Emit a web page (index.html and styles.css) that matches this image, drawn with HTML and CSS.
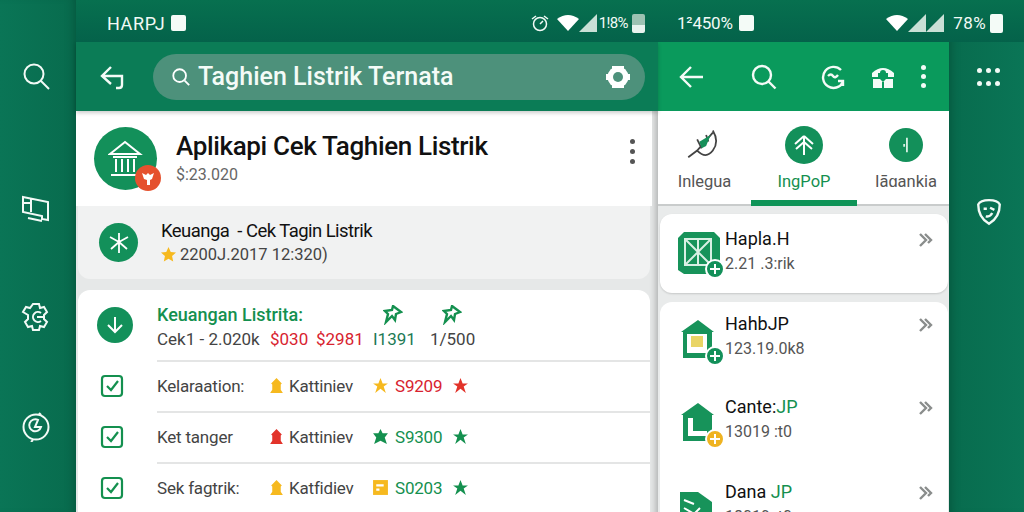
FILE: index.html
```html
<!DOCTYPE html>
<html lang="id">
<head>
  <meta charset="UTF-8" />
  <title>Cek Tagihan Listrik</title>
  <link rel="stylesheet" href="styles.css">
</head>
<body>
  <div class="screen">
    <!-- Rel kiri -->
    <nav class="rail rail-left">
      <svg class="rail-icon" viewBox="0 0 30 30"><circle cx="13" cy="12" r="9.5"/><path d="M20 19l8 8"/></svg>
      <svg class="rail-icon gap-lg" viewBox="0 0 30 30"><path d="M2 3l25 5v18l-6-1v-3L2 18zM10 5v13M2 9h8M7 24l14 3"/></svg>
      <svg class="rail-icon gap-md" viewBox="0 0 30 30"><path d="M12 2h6l1 4 4-1 3 5-3 3v4l3 3-3 5-4-1-1 4h-6l-1-4-4 1-3-5 3-3v-4L2 10l3-5 4 1z"/><path d="M20 11a5 5 0 1 0 0 8M16 15h8"/></svg>
      <svg class="rail-icon gap-compass" viewBox="0 0 30 30"><circle cx="15" cy="15" r="12.5"/><path d="M20 3l-2-2M12 28l-2 2"/><path d="M17 8a6 6 0 1 0 3 7h-6l3-7z"/></svg>
    </nav>

    <div class="main">
      <div class="status">
        <div class="status-left">
          <span class="status-text">HARPJ</span>
          <span class="status-card"></span>
          <div class="status-icons">
            <svg class="alarm" viewBox="0 0 18 18"><circle cx="9" cy="10" r="6.5"/><path d="M1 5l4-3M13 2l4 3M9 10l3-3"/></svg>
            <svg class="wifi" viewBox="0 0 22 16"><path d="M0 4q11-8 22 0L11 16z"/></svg>
            <svg class="signal" viewBox="0 0 18 18"><path d="M0 18L18 0v18z"/></svg>
            <span class="status-pct">1!8%</span>
            <span class="battery battery-dim"></span>
          </div>
        </div>
        <div class="status-right">
          <span class="status-text status-text-plain">1²450%</span>
          <span class="status-card"></span>
          <div class="status-icons">
            <svg class="wifi" viewBox="0 0 22 16"><path d="M0 4q11-8 22 0L11 16z"/></svg>
            <svg class="signal" viewBox="0 0 18 18"><path d="M0 18L18 0v18z"/></svg>
            <svg class="signal" viewBox="0 0 18 18"><path d="M0 18L18 0v18z"/></svg>
            <span class="status-pct status-pct-wide">78%</span>
            <span class="battery"></span>
          </div>
        </div>
      </div>

      <div class="panels">
        <!-- Panel kiri -->
        <section class="panel-left">
          <header class="bar-left">
            <svg class="bar-icon" viewBox="0 0 26 26"><path d="M11 3L2 12l9 8M2 12h20v9q0 3-3 3h-3"/></svg>
            <div class="search">
              <svg class="search-icon" viewBox="0 0 22 22"><circle cx="9.5" cy="9.5" r="7"/><path d="M15 15l5 5"/></svg>
              <span class="search-text">Taghien Listrik Ternata</span>
              <svg class="search-gear" viewBox="0 0 26 26"><circle cx="13" cy="13" r="10.500" fill="#fff"/><path d="M7 2h12v4H7zM7 20h12v4H7zM1 10h4v6H1zM21 10h4v6h-4z" fill="#fff"/><circle cx="13" cy="13" r="5" fill="#4d917b"/></svg>
            </div>
          </header>

          <div class="app-head">
            <div class="app-logo">
              <svg viewBox="0 0 36 40" width="36" height="40"><path d="M2 15L17 3l15 12zM5 18h24M8 20v13M14 20v13M20 20v13M26 20v13M3 36h28" fill="none" stroke="#fff" stroke-width="2"/></svg>
              <span class="app-badge">
                <svg viewBox="0 0 16 16" width="16" height="16"><path d="M2 3l4 2 2-2 2 2 4-2-2 6-2 1v5H7v-5L4 9z" fill="#fff"/></svg>
              </span>
            </div>
            <div class="app-text">
              <h1 class="app-title">Aplikapi Cek Taghien Listrik</h1>
              <p class="app-sub">$:23.020</p>
            </div>
            <div class="kebab kebab-gray"><i></i><i></i><i></i></div>
          </div>

          <div class="notice">
            <div class="notice-logo">
              <svg viewBox="0 0 24 24" width="24" height="24"><path d="M12 2v20M12 11L3 6M12 11l9-5M12 11l-8 7M12 11l8 7" stroke="#fff" stroke-width="1.8" fill="none"/></svg>
            </div>
            <div>
              <p class="notice-title">Keuanga&nbsp; - Cek Tagin Listrik</p>
              <p class="notice-sub"><svg class="notice-star" viewBox="0 0 16 16"><path d="M8 0l2.400 5.300 5.600.6-4.200 3.800 1.200 5.800L8 12.600l-5 2.900 1.200-5.800L0 5.900l5.600-.6z"/></svg>2200J.2017 12:320)</p>
            </div>
          </div>

          <div class="list-card">
            <div class="row row-summary">
              <div class="summary-logo">
                <svg viewBox="0 0 20 20" width="20" height="20"><path d="M10 2v15M3 10l7 7 7-7" stroke="#fff" stroke-width="2" fill="none"/></svg>
              </div>
              <div class="summary-grid">
                <p class="summary-title">Keuangan Listrita:</p>
                <svg class="pin" viewBox="0 0 20 20"><path d="M10 1l8 6-5 2-1 6-3-4-6 6 2-8-3-3 7-1z"/></svg>
                <svg class="pin pin-far" viewBox="0 0 20 20"><path d="M10 1l8 6-5 2-1 6-3-4-6 6 2-8-3-3 7-1z"/></svg>
                <span>Cek1 - 2.020k</span>
                <span class="red">$030</span>
                <span class="red">$2981</span>
                <span class="stat stat-green">I1391</span>
                <span class="stat">1/500</span>
              </div>
            </div>

            <div class="row">
              <span class="check"><svg viewBox="0 0 24 24"><rect x="2" y="2" width="20" height="20" rx="3"/><path d="M7 12l4 4 7-9"/></svg></span>
              <div class="row-body">
                <span>Kelaraation:</span>
                <span class="cell"><svg class="house gold" viewBox="0 0 16 16"><path d="M8 1l5 5-1 1v5l2 3H2l2-3V7L3 6z"/></svg>Kattiniev</span>
                <span class="cell red"><svg class="house gold" viewBox="0 0 16 16"><path d="M8 1l2 5h5l-4 3 2 6-5-4-5 4 2-6-4-3h5z"/></svg>S9209</span>
                <svg class="house red-fill" viewBox="0 0 16 16"><path d="M8 1l2 5h5l-4 3 2 6-5-4-5 4 2-6-4-3h5z"/></svg>
              </div>
            </div>

            <div class="row">
              <span class="check"><svg viewBox="0 0 24 24"><rect x="2" y="2" width="20" height="20" rx="3"/><path d="M7 12l4 4 7-9"/></svg></span>
              <div class="row-body">
                <span>Ket tanger</span>
                <span class="cell"><svg class="house red-fill" viewBox="0 0 16 16"><path d="M8 1l5 5-1 1v5l2 3H2l2-3V7L3 6z"/></svg>Kattiniev</span>
                <span class="cell green"><svg class="house green-fill" viewBox="0 0 16 16"><path d="M8 1l2 4h5l-3 4 2 6-6-3-6 3 2-6-3-4h5z"/></svg>S9300</span>
                <svg class="house green-fill" viewBox="0 0 16 16"><path d="M8 1l2 5h5l-4 3 2 6-5-4-5 4 2-6-4-3h5z"/></svg>
              </div>
            </div>

            <div class="row">
              <span class="check"><svg viewBox="0 0 24 24"><rect x="2" y="2" width="20" height="20" rx="3"/><path d="M7 12l4 4 7-9"/></svg></span>
              <div class="row-body">
                <span>Sek fagtrik:</span>
                <span class="cell"><svg class="house gold" viewBox="0 0 16 16"><path d="M8 1l5 5-1 1v5l2 3H2l2-3V7L3 6z"/></svg>Katfidiev</span>
                <span class="cell green"><svg class="house gold" viewBox="0 0 16 16"><path d="M1 1h14v14H1z"/><path d="M4 5h7v2H4zM4 9h3v2H4z" fill="#fff"/></svg>S0203</span>
                <svg class="house green-fill" viewBox="0 0 16 16"><path d="M8 1l2 5h5l-4 3 2 6-5-4-5 4 2-6-4-3h5z"/></svg>
              </div>
            </div>
          </div>
        </section>

        <!-- Panel kanan -->
        <section class="panel-right">
          <header class="bar-right">
            <svg class="bar-icon" viewBox="0 0 26 26"><path d="M12 3L2 13l10 10M2 13h22"/></svg>
            <svg class="bar-icon bar-search" viewBox="0 0 26 26"><circle cx="11" cy="11" r="9"/><path d="M17.500 17.500l7 7"/></svg>
            <svg class="bar-icon bar-refresh" viewBox="0 0 26 26"><path d="M21 6a10.500 10.500 0 1 0 2 12M23 22v-5h-5M8 12q3-3 5 0t5-1"/></svg>
            <svg class="bar-icon phone" viewBox="0 0 26 26"><path d="M2 9q11-10 22 0v4h-6V9H8v4H2zM3 15h7l3 3 3-3h7v9H3z"/><circle cx="13" cy="9" r="3" fill="#0a9a5c"/><path d="M12 18h2v6h-2z" fill="#0a9a5c"/></svg>
            <div class="kebab bar-kebab"><i></i><i></i><i></i></div>
          </header>

          <div class="tabs">
            <div class="tab">
              <svg class="tab-leaf" viewBox="0 0 34 34"><path d="M2 28l8-6 14-16M10 12l4 8M18 8l2 6M24 4q6 10 0 18t-14 0" fill="none" stroke="#444" stroke-width="1.6"/><path d="M12 14l10-6-4 10-4 2z" fill="#17905a"/></svg>
              <span class="tab-label">Inlegua</span>
            </div>
            <div class="tab tab-active">
              <span class="tab-circle"><svg viewBox="0 0 24 24" width="24" height="24"><path d="M12 3v19M12 3L3 11M12 3l9 8M12 9l-8 7M12 9l8 7" fill="none" stroke="#fff" stroke-width="2"/></svg></span>
              <span class="tab-label">IngPoP</span>
            </div>
            <div class="tab tab-last">
              <span class="tab-circle tab-circle-small"><svg viewBox="0 0 24 24" width="22" height="22"><path d="M13 4v16M10 11v3" fill="none" stroke="#d6efe2" stroke-width="2"/></svg></span>
              <span class="tab-label">Iāɑankia</span>
            </div>
          </div>

          <div class="item-wrap">
            <div class="item-card item-card-top">
              <div class="item">
                <span class="item-logo">
                  <svg viewBox="0 0 44 44" width="44" height="44"><path d="M6 0h30l6 6v32l-6 4H6l-6-4V6z" fill="#17935a" transform="translate(0 1)"/><path d="M7 8h26v26H7zM7 8l26 26M33 8L7 34M20 8v26" fill="none" stroke="#d9f0e4" stroke-width="2"/></svg>
                  <span class="item-badge"></span>
                </span>
                <div class="item-text">
                  <p class="item-title">Hapla.H</p>
                  <p class="item-sub">2.21 .3:rik</p>
                </div>
                <span class="chev">
                  <svg viewBox="0 0 14 14"><path d="M1 1l6 6-6 6M6 1l6 6-3 3"/></svg>
                </span>
              </div>
            </div>
            <div class="item-card">
              <div class="item">
                <span class="item-logo">
                  <svg viewBox="0 0 44 44" width="44" height="44"><path d="M20 2L36 14h-2v26H5V14H3z" fill="#17935a"/><path d="M9 16h20v19H9z" fill="#fff"/><path d="M13 18h12v11H13z" fill="#e9d566"/></svg>
                  <span class="item-badge"></span>
                </span>
                <div class="item-text">
                  <p class="item-title">HahbJP</p>
                  <p class="item-sub">123.19.0k8</p>
                </div>
                <span class="chev">
                  <svg viewBox="0 0 14 14"><path d="M1 1l6 6-6 6M6 1l6 6-3 3"/></svg>
                </span>
              </div>
              <div class="item item-tall">
                <span class="item-logo">
                  <svg viewBox="0 0 44 44" width="44" height="44"><path d="M20 2L36 14h-2v26H5V14H3z" fill="#17935a"/><path d="M10 17h5v18h-5zM15 30h14v5H15z" fill="#fff"/></svg>
                  <span class="item-badge item-badge-gold"></span>
                </span>
                <div class="item-text">
                  <p class="item-title">Cante:<span class="green">JP</span></p>
                  <p class="item-sub">13019 :t0</p>
                </div>
                <span class="chev">
                  <svg viewBox="0 0 14 14"><path d="M1 1l6 6-6 6M6 1l6 6-3 3"/></svg>
                </span>
              </div>
              <div class="item">
                <span class="item-logo">
                  <svg viewBox="0 0 44 44" width="44" height="44"><path d="M2 6h18l14 10v24H2z" fill="#17935a"/><path d="M6 14l10 4M6 22l24 14M14 30l8-8" fill="none" stroke="#fff" stroke-width="2"/></svg>
                </span>
                <div class="item-text">
                  <p class="item-title">Dana <span class="green">JP</span></p>
                  <p class="item-sub">18019 :t0</p>
                </div>
                <span class="chev">
                  <svg viewBox="0 0 14 14"><path d="M1 1l6 6-6 6M6 1l6 6-3 3"/></svg>
                </span>
              </div>
            </div>
          </div>
        </section>
      </div>
    </div>

    <!-- Rel kanan -->
    <nav class="rail rail-right">
      <div class="dots"><i></i><i></i><i></i><i></i><i></i><i></i></div>
      <svg class="rail-icon shield" viewBox="0 0 26 26"><path d="M13 2q8 0 10 4 0 12-10 18Q3 18 3 6q2-4 10-4z"/><path d="M8 10h3M14 9l4 2M10 17q4 1 6-3"/></svg>
    </nav>
  </div>
</body>
</html>
```

FILE: styles.css
```css
* { box-sizing: border-box; }
body {
  margin: 0;
  width: 1024px;
  height: 512px;
  overflow: hidden;
  font-family: Roboto, "Liberation Sans", sans-serif;
  background: #0a7252;
}
p, h1 { margin: 0; }

.screen {
  display: grid;
  grid-template-columns: 76px 873px 75px;
  height: 512px;
  overflow: hidden;
  background: linear-gradient(90deg, #0a7556 0, #086c4e 7%, #086c4e 93%, #0a7556 100%);
}
.main { position: relative; min-width: 0; }

/* rel samping */
.rail {
  display: flex;
  flex-direction: column;
  align-items: center;
  padding-top: 62px;
}
.rail-left { padding-right: 4px; box-shadow: inset -8px 0 8px -6px rgba(0,50,35,0.35); }
.rail-right { padding-left: 4px; padding-right: 0; padding-top: 68px; box-shadow: inset 8px 0 8px -6px rgba(0,50,35,0.35); }
.rail-icon {
  width: 30px;
  height: 30px;
  fill: none;
  stroke: #f2faf6;
  stroke-width: 2;
  flex: none;
}
.gap-lg { margin-top: 102px; }
.gap-md { margin-top: 78px; }
.gap-compass { margin-top: 80px; }
.shield { width: 28px; height: 28px; margin-top: 112px; stroke-width: 2.2; }
.dots {
  display: grid;
  grid-template-columns: repeat(3, 5px);
  gap: 8px 4px;
}
.dots i { width: 5px; height: 5px; border-radius: 50%; background: #f2faf6; }

/* status */
.status {
  display: flex;
  width: 948px;
  height: 42px;
  color: #f2faf6;
  background: linear-gradient(#07704f, #04624a);
  margin-right: -75px;
  position: relative;
  z-index: 1;
}
.status-left {
  display: flex;
  align-items: center;
  width: 582px;
  padding: 4px 13px 0 31px;
}
.status-right {
  display: flex;
  align-items: center;
  flex: 1;
  padding: 4px 21px 0 19px;
}
.status-text { font-size: 18px; margin-right: 6px; letter-spacing: 0.6px; }
.status-text-plain { font-size: 17px; margin-right: 6px; letter-spacing: -0.2px; }
.status-card {
  width: 15px;
  height: 16px;
  background: #f4fbf7;
  border-radius: 2px;
}
.status-icons {
  display: flex;
  align-items: center;
  margin-left: auto;
}
.alarm { width: 18px; height: 18px; fill: none; stroke: #f2faf6; stroke-width: 1.5; margin-right: 8px; }
.wifi { width: 22px; height: 16px; fill: #fff; }
.signal { width: 18px; height: 18px; fill: #c9e0d6; }
.status-pct { font-size: 15px; margin-left: 2px; letter-spacing: -0.6px; }
.status-pct-wide { font-size: 17px; margin-left: 9px; letter-spacing: 0.4px; }
.battery {
  width: 13px;
  height: 19px;
  margin-left: 4px;
  background: #f4fbf7;
  border-radius: 2px;
}
.battery-dim { background: linear-gradient(#9cc2b2 60%, #e8f3ee 60%); }

.panels {
  display: grid;
  grid-template-columns: 582px 291px;
  height: 470px;
}

/* panel kiri */
.panel-left {
  background: #e6e8e8;
  min-width: 0;
  box-shadow: inset -8px 0 6px -6px rgba(0,0,0,0.25);
}
.bar-left {
  display: flex;
  align-items: center;
  height: 69px;
  padding: 0 13px 0 24px;
  background: #0b7c56;
  box-shadow: 0 2px 4px rgba(0,0,0,0.2);
  position: relative;
}
.bar-icon {
  width: 26px;
  height: 26px;
  flex: none;
  fill: none;
  stroke: #f4fbf7;
  stroke-width: 2.4;
}
.search {
  display: flex;
  align-items: center;
  flex: 1;
  height: 46px;
  margin-left: 27px;
  padding: 0 14px 0 18px;
  border-radius: 23px;
  background: #4d917b;
}
.search-icon { width: 20px; height: 20px; fill: none; stroke: #fff; stroke-width: 2; flex: none; }
.search-text { margin-left: 7px; font-size: 25px; font-weight: 500; color: #f4fbf7; }
.search-gear { width: 26px; height: 26px; margin-left: auto; }

.app-head {
  display: flex;
  align-items: center;
  height: 95px;
  padding: 0 17px 0 18px;
  margin-right: 6px;
  background: #fff;
}
.app-logo {
  position: relative;
  display: flex;
  align-items: center;
  justify-content: center;
  width: 63px;
  height: 63px;
  border-radius: 50%;
  background: #13905a;
  flex: none;
}
.app-badge {
  position: absolute;
  right: -4px;
  bottom: -1px;
  display: flex;
  align-items: center;
  justify-content: center;
  width: 26px;
  height: 26px;
  border-radius: 50%;
  background: #e5512e;
}
.app-text { margin-left: 19px; }
.app-title { font-size: 26px; font-weight: 500; color: #111; letter-spacing: -0.35px; line-height: 30px; }
.app-sub { font-size: 16px; color: #666; line-height: 24px; margin-top: 2px; }
.kebab { display: flex; flex-direction: column; gap: 4px; margin-left: auto; }
.kebab i { width: 5px; height: 5px; border-radius: 50%; background: #f4fbf7; }
.kebab-gray i { background: #555; }
.kebab-gray { gap: 5px; margin-top: -14px; }

.notice {
  display: flex;
  align-items: center;
  height: 73px;
  margin: 0 8px 11px 2px;
  padding: 0 21px;
  border-radius: 0 0 12px 12px;
  background: #f1f2f2;
}
.notice-logo {
  display: flex;
  align-items: center;
  justify-content: center;
  width: 39px;
  height: 39px;
  border-radius: 50%;
  background: #13905a;
  margin-right: 23px;
  flex: none;
}
.notice-title { font-size: 18.5px; color: #111; letter-spacing: -0.55px; line-height: 24px; }
.notice-sub { display: flex; align-items: center; font-size: 16.5px; color: #444; line-height: 24px; }
.notice-star { width: 15px; height: 15px; margin-right: 4px; fill: #f6b91f; }

.list-card {
  height: 222px;
  margin: 0 8px 0 2px;
  border-radius: 12px 12px 0 0;
  background: #fff;
  font-size: 17px;
  color: #444;
}
.row {
  display: flex;
  align-items: stretch;
}
.row-summary { height: 70px; }
.summary-logo {
  display: flex;
  align-items: center;
  justify-content: center;
  width: 36px;
  height: 36px;
  margin: 17px 24px 0 19px;
  border-radius: 50%;
  background: #13905a;
  flex: none;
}
.summary-grid {
  display: grid;
  grid-template-columns: 113px 46px 57px 57px 1fr;
  grid-template-rows: 26px 24px;
  align-items: center;
  margin-top: 11px;
}
.summary-title {
  grid-column: 1 / 4;
  font-size: 18px;
  font-weight: 500;
  color: #14904f;
}
.pin {
  width: 20px;
  height: 20px;
  margin: 2px 0 0 10px;
  fill: none;
  stroke: #14904f;
  stroke-width: 2.4;
}
.pin-far { margin-left: 12px; }
.red { color: #d8232f; }
.green { color: #14904f; }
.stat-green { color: #1d7a55; }

.check {
  display: flex;
  align-items: center;
  width: 79px;
  padding-left: 22px;
  flex: none;
}
.check svg {
  width: 24px;
  height: 24px;
  fill: none;
  stroke: #14904f;
  stroke-width: 2.2;
}
.row-body {
  display: grid;
  grid-template-columns: 112px 104px 80px 1fr;
  align-items: center;
  flex: 1;
  height: 51px;
  padding-bottom: 2px;
  border-top: 2px solid #e4e5e5;
  letter-spacing: -0.2px;
}
.cell { display: flex; align-items: center; gap: 4px; }
.cell:last-of-type { gap: 6px; }
.house { width: 17px; height: 17px; flex: none; margin-left: -1px; }
.gold { fill: #f6b91f; }
.red-fill { fill: #e2332a; }
.green-fill { fill: #14904f; }

/* panel kanan */
.panel-right { background: #e9ebeb; min-width: 0; }
.bar-right {
  display: flex;
  align-items: center;
  height: 69px;
  padding: 0 0 0 21px;
  background: #0a9a5c;
}
.bar-search { margin-left: 46px; }
.bar-refresh { margin-left: 43px; }
.phone { margin-left: 24px; fill: #f4fbf7; stroke: none; }
.bar-kebab { margin-left: 25px; }

.tabs {
  display: grid;
  grid-template-columns: 93px 106px 92px;
  height: 95px;
  background: #fff;
  border-bottom: 2px solid #c9cccc;
}
.tab {
  display: flex;
  flex-direction: column;
  align-items: center;
  height: 95px;
  padding-top: 15px;
}
.tab-last { padding-left: 6px; }
.tab-active { border-bottom: 6px solid #0f9458; }
.tab-leaf { width: 38px; height: 38px; }
.tab-circle {
  display: flex;
  align-items: center;
  justify-content: center;
  width: 38px;
  height: 38px;
  border-radius: 50%;
  background: #13905a;
}
.tab-circle-small { width: 34px; height: 34px; margin-top: 2px; margin-bottom: 2px; }
.tab-label { margin-top: 8px; font-size: 16.5px; color: #555; }
.tab-active .tab-label { color: #14904f; }

.item-wrap { padding-top: 8px; }
.item-card {
  margin: 0 1px 9px 2px;
  border-radius: 12px 12px 0 0;
  background: #fff;
  height: 210px;
}
.item-card-top {
  height: 79px;
  border-radius: 12px;
  box-shadow: 0 1px 2px rgba(0,0,0,0.15);
}
.item {
  display: flex;
  align-items: flex-start;
  height: 83px;
  padding: 9px 15px 0 18px;
}
.item-tall { height: 85px; }
.item-card-top .item { height: 79px; padding-top: 12px; }
.item-logo {
  position: relative;
  width: 44px;
  height: 44px;
  margin-top: 7px;
  flex: none;
}
.item-card-top .item-logo { margin-top: 5px; }
.item-badge {
  position: absolute;
  right: -3px;
  bottom: -4px;
  width: 20px;
  height: 20px;
  border-radius: 50%;
  border: 2px solid #fff;
  background:
    linear-gradient(#fff, #fff) center / 10px 2px no-repeat,
    linear-gradient(#fff, #fff) center / 2px 10px no-repeat,
    #13905a;
}
.item-badge-gold {
  background:
    linear-gradient(#fff, #fff) center / 10px 2px no-repeat,
    linear-gradient(#fff, #fff) center / 2px 10px no-repeat,
    #efb321;
}
.item-text { margin-left: 3px; }
.item-title { font-size: 18px; color: #111; line-height: 26px; }
.item-sub { font-size: 16px; color: #555; line-height: 24px; }
.chev { margin-left: auto; margin-top: 7px; }
.chev svg {
  display: block;
  width: 14px;
  height: 14px;
  fill: none;
  stroke: #8a8d8c;
  stroke-width: 2.4;
}
```
